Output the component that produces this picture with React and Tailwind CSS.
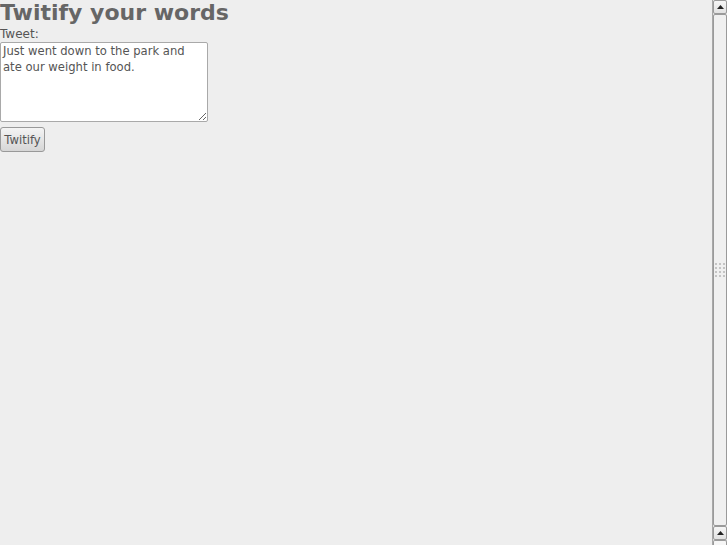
import React from "react";

const ArrowUp = () => (
  <svg width="7" height="4" viewBox="0 0 7 4" className="block">
    <path d="M0 4 L3.5 0 L7 4 Z" fill="#222" />
  </svg>
);

const ScrollButton = ({ children }) => (
  <div className="h-[14px] shrink-0 flex items-center justify-center border border-[#9a9a9a] rounded-[2px] bg-gradient-to-b from-[#f6f6f6] to-[#e2e2e2]">
    {children}
  </div>
);

const Scrollbar = () => (
  <div className="w-[15px] h-full flex flex-col border-l border-[#a8a8a8] bg-[#e6e6e6]">
    <ScrollButton>
      <ArrowUp />
    </ScrollButton>
    <div className="flex-1 flex items-center justify-center border border-[#9a9a9a] rounded-[2px] bg-[#f0f0f0]">
      <div className="grid grid-cols-3 gap-[2px]">
        {Array.from({ length: 12 }).map((_, i) => (
          <div key={i} className="w-[2px] h-[2px] bg-[#c4c4c4]" />
        ))}
      </div>
    </div>
    <ScrollButton>
      <ArrowUp />
    </ScrollButton>
    <div className="h-[5px] shrink-0 border border-b-0 border-[#9a9a9a] rounded-t-[2px] bg-[#f6f6f6]" />
  </div>
);

export default function App() {
  return (
    <div className="w-[727px] h-[545px] flex bg-[#eeeeee] overflow-hidden font-['DejaVu_Sans',sans-serif]">
      <div className="flex-1 flex flex-col items-start">
        <h1 className="text-[22px] leading-[26px] font-bold text-[#666666]">
          Twitify your words
        </h1>
        <label className="text-[12px] leading-[16px] text-[#555555]">Tweet:</label>
        <textarea
          defaultValue="Just went down to the park and ate our weight in food."
          className="w-[208px] h-[80px] bg-white border border-[#a9a9a9] rounded-[2px] pl-[2px] pr-[3px] py-0 text-[11.6px] leading-[16px] text-[#555555] outline-none"
        />
        <button className="mt-[5px] w-[45px] h-[25px] pt-px border border-[#999999] rounded-[3px] bg-gradient-to-b from-[#f4f4f4] to-[#d6d6d6] text-[11.6px] leading-[16px] text-[#555555]">
          Twitify
        </button>
      </div>
      <Scrollbar />
    </div>
  );
}
